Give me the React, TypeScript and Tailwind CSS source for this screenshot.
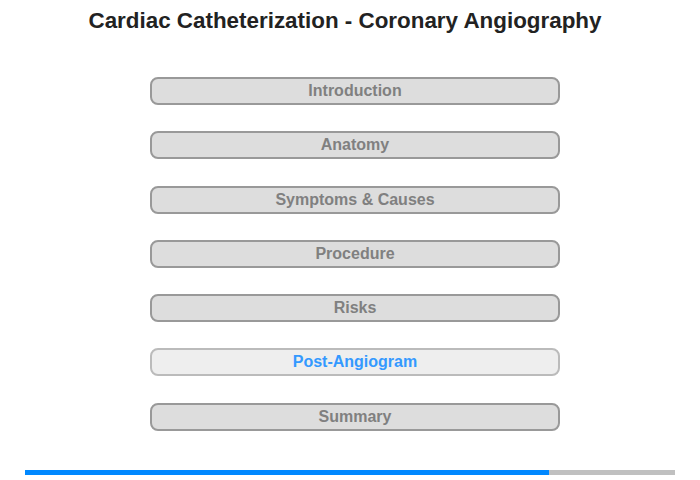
const sections = [
  'Introduction',
  'Anatomy',
  'Symptoms & Causes',
  'Procedure',
  'Risks',
  'Post-Angiogram',
  'Summary',
];

const active = 'Post-Angiogram';

export default function App() {
  return (
    <div className="w-[700px] h-[480px] bg-white overflow-hidden font-['Liberation_Sans',Arial,sans-serif]">
      <h1 className="pt-[7px] h-[35px] box-content text-center text-[22.4px] leading-[28px] font-bold text-[#222] mr-[10px]">
        Cardiac Catheterization - Coronary Angiography
      </h1>

      {/* Section menu */}
      <div className="mt-[35px] ml-[150px] w-[410px] flex flex-col gap-[26.3px]">
        {sections.map((name) => {
          const isActive = name === active;
          return (
            <button
              key={name}
              className={`h-[28px] w-full rounded-[8px] border-2 text-[16px] font-bold leading-[24px] ${
                isActive
                  ? 'bg-[#eeeeee] border-[#bbbbbb] text-[#3399ff]'
                  : 'bg-[#dddddd] border-[#999999] text-[#808080]'
              }`}
            >
              {name}
            </button>
          );
        })}
      </div>

      {/* Progress */}
      <div className="mt-[39px] ml-[25px] w-[650px] h-[5px] bg-[#c0c0c0] flex">
        <div className="w-[524px] h-full bg-[#0088ff]" />
      </div>
    </div>
  );
}
